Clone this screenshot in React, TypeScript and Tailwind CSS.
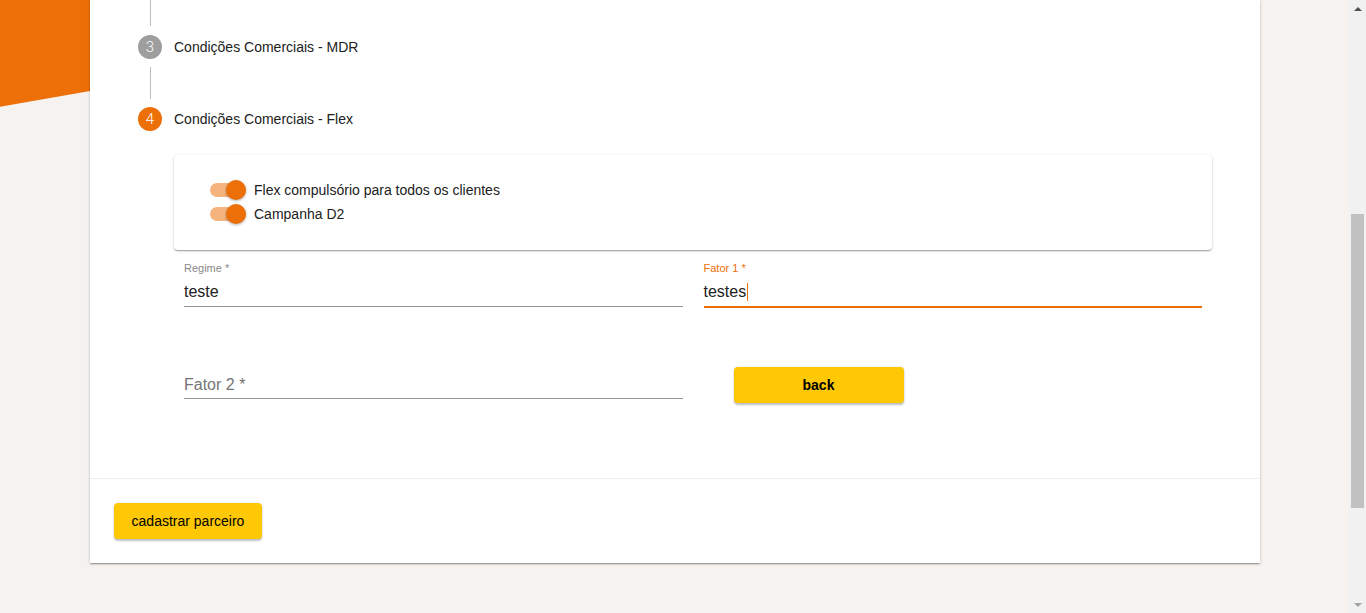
import React from 'react';

function StepIcon({ n, active }: { n: number; active?: boolean }) {
  return (
    <div
      className={`flex h-6 w-6 items-center justify-center rounded-full text-[15px] font-light text-white ${
        active ? 'bg-[#ec6f07]' : 'bg-[#9e9e9e]'
      }`}
      style={{ fontFamily: 'Roboto, sans-serif' }}
    >
      {n}
    </div>
  );
}

function Toggle({ label }: { label: string }) {
  return (
    <div className="flex h-6 items-center">
      <div className="relative h-[14px] w-[36px] rounded-full bg-[#f5b47e]">
        <div className="absolute right-0 top-[-3px] h-5 w-5 rounded-full bg-[#ec6f07] shadow-[0_1px_3px_rgba(0,0,0,0.3)]" />
      </div>
      <span className="ml-2 text-[14px] text-[#212121]">{label}</span>
    </div>
  );
}

function Field({
  label,
  value,
  focused,
}: {
  label: string;
  value?: string;
  focused?: boolean;
}) {
  if (!value && !focused) {
    return (
      <div className="flex flex-col">
        <div className="h-[14px]" />
        <div className="mt-[2px] h-[29px] border-b border-[#949494] text-[16px] leading-[30px] text-[#757575]">
          {label}
        </div>
      </div>
    );
  }
  return (
    <div className="flex flex-col">
      <div
        className={`h-[14px] text-[11px] leading-[14px] ${
          focused ? 'text-[#ec6f07]' : 'text-[#8a8a8a]'
        }`}
      >
        {label}
      </div>
      <div
        className={`mt-[2px] flex items-center text-[16px] text-[#212121] ${
          focused ? 'h-[31px] border-b-2 border-[#ec6f07]' : 'h-[30px] border-b border-[#949494]'
        }`}
      >
        {value}
        {focused && <span className="ml-px inline-block h-[18px] w-px bg-[#ec6f07]" />}
      </div>
    </div>
  );
}

function Scrollbar() {
  return (
    <div className="flex w-[17px] flex-col bg-[#f1f1f1]">
      <div className="flex h-[17px] items-center justify-center">
        <div className="h-0 w-0 border-x-[4px] border-b-[4px] border-x-transparent border-b-[#505050]" />
      </div>
      <div className="flex-1">
        <div className="mx-[2px] mt-[197px] h-[294px] bg-[#c1c1c1]" />
      </div>
      <div className="flex h-[17px] items-center justify-center">
        <div className="h-0 w-0 border-x-[4px] border-t-[4px] border-x-transparent border-t-[#a3a3a3]" />
      </div>
    </div>
  );
}

export default function App() {
  return (
    <div
      className="relative flex h-[613px] w-full overflow-hidden bg-[#f5f2ef]"
      style={{ fontFamily: '"Liberation Sans", Arial, sans-serif' }}
    >
      {/* orange corner decoration */}
      <div className="absolute left-0 top-0 h-[110px] w-[120px] bg-[#ec6f07] [clip-path:polygon(0_0,100%_0,100%_78%,0_97%)]" />

      <div className="relative flex-1 pl-[90px]">
        <div className="w-[1170px] bg-white shadow-[0_1px_3px_rgba(0,0,0,0.2),0_1px_1px_rgba(0,0,0,0.14),0_2px_1px_-1px_rgba(0,0,0,0.12)]">
          {/* stepper */}
          <div className="pl-[48px]">
            <div className="ml-[11.5px] h-[26px] w-px bg-[#bdbdbd]" />
            <div className="mt-[9px] flex items-center">
              <StepIcon n={3} />
              <span className="ml-3 pt-px text-[14px] text-[#212121]">Condições Comerciais - MDR</span>
            </div>
            <div className="my-2 ml-[11.5px] h-[32px] w-px bg-[#bdbdbd]" />
            <div className="flex items-center">
              <StepIcon n={4} active />
              <span className="ml-3 pt-px text-[14px] text-[#212121]">Condições Comerciais - Flex</span>
            </div>
          </div>

          {/* step content */}
          <div className="ml-[84px] mr-[48px] mt-6 pb-[75px]">
            <div className="rounded-sm bg-white pb-6 pl-9 pt-[23px] shadow-[0_1px_3px_rgba(0,0,0,0.2),0_1px_1px_rgba(0,0,0,0.14),0_2px_1px_-1px_rgba(0,0,0,0.12)]">
              <Toggle label="Flex compulsório para todos os clientes" />
              <Toggle label="Campanha D2" />
            </div>

            <div className="mx-[10px] mt-[11px] grid grid-cols-2 gap-x-[21px]">
              <Field label="Regime *" value="teste" />
              <Field label="Fator 1 *" value="testes" focused />
            </div>

            <div className="mx-[10px] mt-[46px] grid grid-cols-2 items-start gap-x-[21px]">
              <Field label="Fator 2 *" />
              <div className="pl-[30px]">
                <button className="mt-[13px] h-9 w-[170px] rounded-sm bg-[#fec804] text-[14px] font-bold text-black shadow-[0_2px_2px_rgba(0,0,0,0.24),0_0_2px_rgba(0,0,0,0.12)]">
                  back
                </button>
              </div>
            </div>
          </div>

          {/* footer */}
          <div className="border-t border-[#eeeeee] px-6 py-6">
            <button className="h-9 w-[148px] rounded-sm bg-[#fec804] text-[14px] text-black shadow-[0_2px_2px_rgba(0,0,0,0.24),0_0_2px_rgba(0,0,0,0.12)]">
              cadastrar parceiro
            </button>
          </div>
        </div>
      </div>

      <Scrollbar />
    </div>
  );
}
